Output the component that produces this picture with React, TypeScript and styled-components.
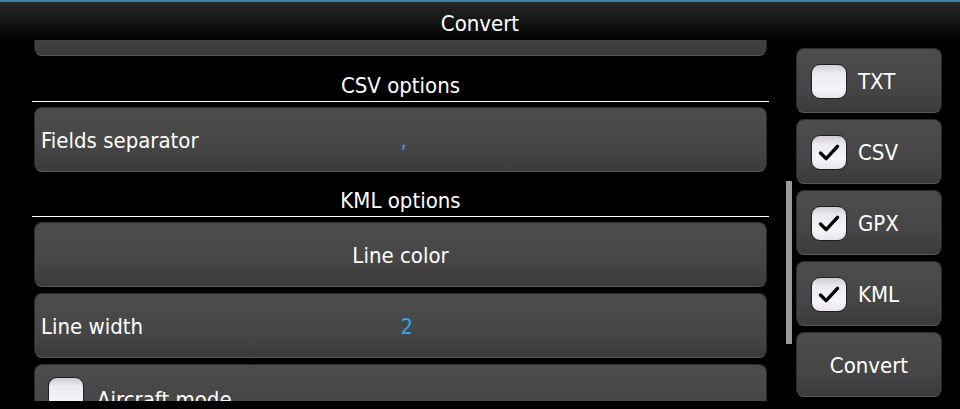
import * as React from 'react';
import styled, { createGlobalStyle } from 'styled-components';

const GlobalStyle = createGlobalStyle`
  html, body {
    margin: 0;
    padding: 0;
    background: #000;
  }
  body {
    font-family: "DejaVu Sans Condensed", "DejaVu Sans", sans-serif;
    font-stretch: condensed;
    color: #fff;
  }
`;

const Screen = styled.div`
  width: 960px;
  height: 409px;
  background: #000;
  overflow: hidden;
`;

const TitleBar = styled.div`
  height: 40px;
  border-top: 2px solid #3f7fa5;
  box-sizing: border-box;
  display: flex;
  align-items: center;
  justify-content: center;
  background: linear-gradient(to bottom, #262626 0%, #141414 55%, #000 100%);
  font-size: 22px;
  padding-top: 5px;
`;

const Main = styled.div`
  display: grid;
  grid-template-columns: 796px 146px;
  height: 361px;
`;

const ListPane = styled.div`
  position: relative;
  overflow: hidden;
  padding: 0 27px 0 32px;
`;

const ListScroll = styled.div`
  display: flex;
  flex-direction: column;
  margin-top: -49px;
`;

const ScrollIndicator = styled.div`
  position: absolute;
  right: 4px;
  top: 141px;
  width: 6px;
  height: 163px;
  background: #9a9a9a;
`;

const Panel = styled.div<{ $center?: boolean }>`
  box-sizing: border-box;
  height: 65px;
  margin: 0 2px 6px;
  border-radius: 8px;
  border: 1px solid #2c2c2c;
  border-bottom-color: #5a5a5a;
  background: linear-gradient(to bottom, #4c4c4c 0%, #464646 60%, #3b3b3b 100%);
  display: grid;
  grid-template-columns: ${(p) => (p.$center ? '1fr' : '1fr 1fr')};
  align-items: center;
  justify-items: ${(p) => (p.$center ? 'center' : 'start')};
  padding: 2px 6px 0;
  font-size: 22px;
`;

const CheckPanel = styled(Panel)`
  display: flex;
  align-items: flex-start;
  gap: 13px;
  padding: 12px 13px 0;
`;

const CheckLabel = styled.span`
  padding-top: 10px;
`;

const Value = styled.span`
  color: #34a2ee;
`;

const SectionHeader = styled.div<{ $h?: number }>`
  height: ${(p) => p.$h ?? 40}px;
  border-bottom: 1px solid #fff;
  display: flex;
  align-items: flex-end;
  justify-content: center;
  padding-bottom: 3px;
  box-sizing: border-box;
  margin-bottom: 5px;
  font-size: 22px;
`;

const SideColumn = styled.div`
  display: flex;
  flex-direction: column;
  gap: 6px;
  padding-top: 8px;
`;

const SideButton = styled.div<{ $center?: boolean }>`
  box-sizing: border-box;
  height: 65px;
  border-radius: 8px;
  border: 1px solid #2c2c2c;
  border-bottom-color: #5a5a5a;
  background: linear-gradient(to bottom, #4c4c4c 0%, #464646 60%, #3b3b3b 100%);
  display: flex;
  align-items: center;
  justify-content: ${(p) => (p.$center ? 'center' : 'flex-start')};
  gap: 11px;
  padding-left: ${(p) => (p.$center ? '0' : '14px')};
  padding-top: 2px;
  font-size: 22px;
`;

const Box = styled.div`
  box-sizing: border-box;
  width: 36px;
  height: 35px;
  flex: none;
  border-radius: 9px;
  border: 1px solid #1e1e1e;
  background: linear-gradient(to bottom, #cfcdd3 0%, #eceaef 25%, #f6f4f8 70%, #e8e6ec 100%);
  display: flex;
  align-items: center;
  justify-content: center;
`;

const Check = ({ checked }: { checked: boolean }) => (
  <Box>
    {checked && (
      <svg width="36" height="35" viewBox="0 0 36 35">
        <path
          d="M9 18 L15 24 L27 11"
          fill="none"
          stroke="#000"
          strokeWidth="3.6"
          strokeLinecap="round"
          strokeLinejoin="round"
        />
      </svg>
    )}
  </Box>
);

const formats = [
  { name: 'TXT', checked: false },
  { name: 'CSV', checked: true },
  { name: 'GPX', checked: true },
  { name: 'KML', checked: true },
];

export default function App() {
  return (
    <Screen>
      <GlobalStyle />
      <TitleBar>Convert</TitleBar>
      <Main>
        <ListPane>
          <ListScroll>
            <Panel $center />
            <SectionHeader>CSV options</SectionHeader>
            <Panel>
              <span>Fields separator</span>
              <Value>,</Value>
            </Panel>
            <SectionHeader $h={39}>KML options</SectionHeader>
            <Panel $center>
              <span>Line color</span>
            </Panel>
            <Panel>
              <span>Line width</span>
              <Value>2</Value>
            </Panel>
            <CheckPanel>
              <Check checked={false} />
              <CheckLabel>Aircraft mode</CheckLabel>
            </CheckPanel>
          </ListScroll>
          <ScrollIndicator />
        </ListPane>
        <SideColumn>
          {formats.map((f) => (
            <SideButton key={f.name}>
              <Check checked={f.checked} />
              <span>{f.name}</span>
            </SideButton>
          ))}
          <SideButton $center>Convert</SideButton>
        </SideColumn>
      </Main>
    </Screen>
  );
}
